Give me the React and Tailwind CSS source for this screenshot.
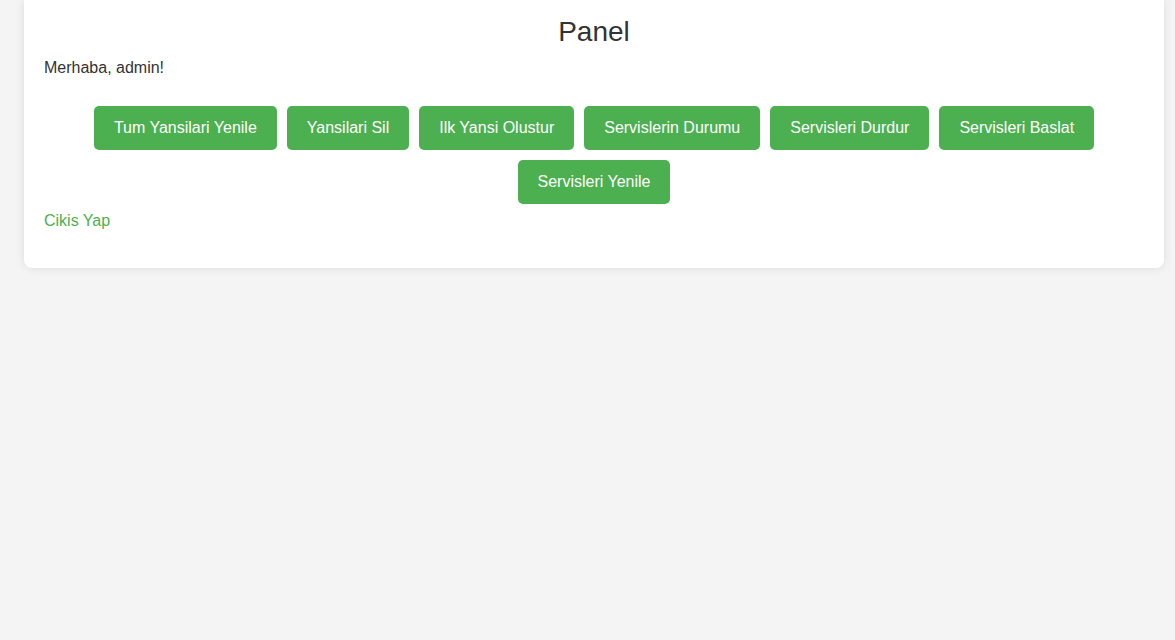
import React from 'react';

const actions = [
  'Tum Yansilari Yenile',
  'Yansilari Sil',
  'Ilk Yansi Olustur',
  'Servislerin Durumu',
  'Servisleri Durdur',
  'Servisleri Baslat',
  'Servisleri Yenile',
];

const App = () => {
  return (
    <div className="min-h-screen bg-[#f4f4f4] font-['Liberation_Sans',Arial,sans-serif] text-[#333]">
      <div className="ml-[24px] w-[1140px] bg-white rounded-b-lg shadow-[0_0_10px_rgba(0,0,0,0.1)] px-5 pt-[16px] pb-[38px]">
        <h2 className="text-[28px] leading-[32px] text-center">Panel</h2>
        <p className="mt-[11px] text-base leading-[18px]">Merhaba, admin!</p>
        <div className="mt-[29px] flex flex-wrap justify-center gap-[10px]">
          {actions.map((label) => (
            <button
              key={label}
              className="bg-[#4CAF50] text-white text-base leading-[20px] py-3 px-5 rounded-[5px]"
            >
              {label}
            </button>
          ))}
        </div>
        <a href="#" className="block mt-[8px] text-base leading-[18px] text-[#4CAF50]">
          Cikis Yap
        </a>
      </div>
    </div>
  );
};

export default App;
